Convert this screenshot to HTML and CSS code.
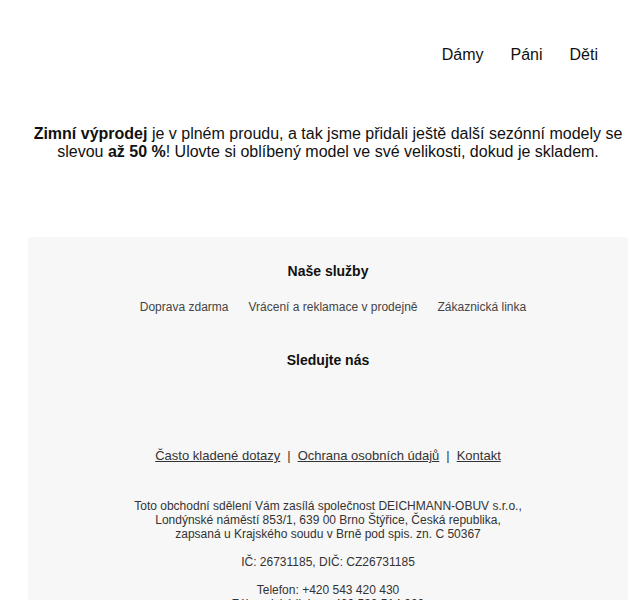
FILE: index.html
```html
<!DOCTYPE html>
<html lang="cs">
<head>
<meta charset="utf-8">
<title>Deichmann</title>
<link rel="stylesheet" href="styles.css">
</head>
<body>
<div class="wrap">
  <header class="header">
    <nav class="nav">
      <a href="#">Dámy</a>
      <a href="#">Páni</a>
      <a href="#">Děti</a>
    </nav>
  </header>
  <section class="intro">
    <p><strong>Zimní výprodej</strong> je v plném proudu, a tak jsme přidali ještě další sezónní modely se slevou <strong>až 50 %</strong>! Ulovte si oblíbený model ve své velikosti, dokud je skladem.</p>
  </section>
  <footer class="footer">
    <h3 class="ftitle">Naše služby</h3>
    <div class="services">
      <a href="#">Doprava zdarma</a>
      <a href="#">Vrácení a reklamace v prodejně</a>
      <a href="#">Zákaznická linka</a>
    </div>
    <h3 class="ftitle follow">Sledujte nás</h3>
    <div class="links">
      <a href="#">Často kladené dotazy</a><span class="sep">|</span><a href="#">Ochrana osobních údajů</a><span class="sep">|</span><a href="#">Kontakt</a>
    </div>
    <div class="company">
      <p>Toto obchodní sdělení Vám zasílá společnost DEICHMANN-OBUV s.r.o.,<br>Londýnské náměstí 853/1, 639 00 Brno Štýřice, Česká republika,<br>zapsaná u Krajského soudu v Brně pod spis. zn. C 50367</p>
      <p>IČ: 26731185, DIČ: CZ26731185</p>
      <p>Telefon: +420 543 420 430<br>Zákaznická linka: +420 530 514 000</p>
    </div>
  </footer>
</div>
</body>
</html>
```
FILE: styles.css
```css
html, body {
  margin: 0;
  padding: 0;
  background: #ffffff;
}
body {
  font-family: "Liberation Sans", Arial, sans-serif;
  color: #111111;
}
.wrap {
  width: 600px;
  margin-left: 28px;
}
.header {
  display: flex;
  justify-content: flex-end;
  padding: 46px 30px 0 0;
  height: 75px;
}
.nav {
  display: flex;
  gap: 27px;
}
.nav a {
  color: #111111;
  text-decoration: none;
  font-size: 16px;
  line-height: 18px;
}
.intro {
  padding: 4px 0 0;
  height: 112px;
}
.intro p {
  margin: 0 -6px;
  font-size: 16px;
  line-height: 18px;
  text-align: center;
  color: #111111;
}
.footer {
  background: #f7f7f7;
  padding: 26px 0 30px;
  text-align: center;
}
.ftitle {
  margin: 0;
  font-size: 14px;
  line-height: 16px;
  font-weight: bold;
  color: #111111;
}
.services {
  display: flex;
  justify-content: center;
  gap: 20px;
  margin-top: 21px;
  padding-left: 10px;
}
.services a {
  font-size: 12px;
  line-height: 14px;
  color: #444444;
  text-decoration: none;
}
.follow {
  margin-top: 38px;
}
.links {
  margin-top: 80px;
  font-size: 13px;
  line-height: 15px;
  color: #333333;
}
.links a {
  color: #333333;
  text-decoration: underline;
}
.sep {
  margin: 0 7px;
}
.company {
  margin-top: 36px;
  font-size: 12px;
  line-height: 14px;
  color: #333333;
}
.company p {
  margin: 0 0 14px;
}
```
